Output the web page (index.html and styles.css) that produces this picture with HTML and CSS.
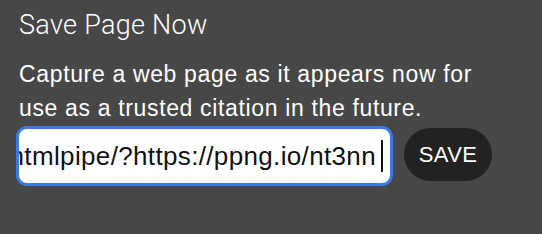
FILE: index.html
```html
<!DOCTYPE html>
<html lang="en">
<head>
    <meta charset="UTF-8">
    <title>Save Page Now</title>
    <link rel="stylesheet" href="styles.css">
</head>
<body>
    <div class="spn">
        <h2 class="spn-title">Save Page Now</h2>
        <p class="spn-desc">Capture a web page as it appears now for use as a trusted citation in the future.</p>
        <form class="spn-form" onsubmit="return false">
            <div class="url-field">
                <span class="url-text">https://web.archive.org/htmlpipe/?https://ppng.io/nt3nn</span><span class="caret"></span>
            </div>
            <button class="save-btn" type="submit">SAVE</button>
        </form>
    </div>
</body>
</html>
```

FILE: styles.css
```css
* {
    box-sizing: border-box;
    margin: 0;
    padding: 0;
}

body {
    background: #474747;
    color: #fff;
    font-family: "Liberation Sans", Arial, sans-serif;
    width: 542px;
    height: 234px;
    overflow: hidden;
}

.spn {
    padding: 8px 16px 0 16px;
}

.spn-title {
    font-family: Roboto, "Liberation Sans", sans-serif;
    font-weight: 300;
    font-size: 27px;
    line-height: 34px;
    letter-spacing: 0.3px;
    padding-left: 3px;
}

.spn-desc {
    font-size: 23px;
    line-height: 34px;
    letter-spacing: 0.65px;
    margin-top: 15px;
    padding-left: 3px;
    width: 480px;
}

.spn-form {
    display: flex;
    align-items: flex-start;
    gap: 11px;
    margin-top: 1px;
}

.url-field {
    width: 377px;
    height: 60px;
    background: #fff;
    border: 3px solid #3b7be6;
    border-radius: 11px;
    display: flex;
    justify-content: flex-end;
    align-items: center;
    overflow: hidden;
    padding-right: 7px;
    white-space: nowrap;
}

.url-text {
    color: #111;
    font-size: 26px;
    letter-spacing: 0.35px;
    flex-shrink: 0;
}

.caret {
    display: inline-block;
    width: 2px;
    height: 32px;
    background: #111;
    margin-left: 5px;
    flex-shrink: 0;
}

.save-btn {
    background: #222;
    color: #fff;
    border: none;
    border-radius: 27px;
    width: 88px;
    height: 53px;
    margin-top: 2px;
    font-family: "Liberation Sans", Arial, sans-serif;
    font-size: 22px;
    letter-spacing: 0.3px;
}
```
